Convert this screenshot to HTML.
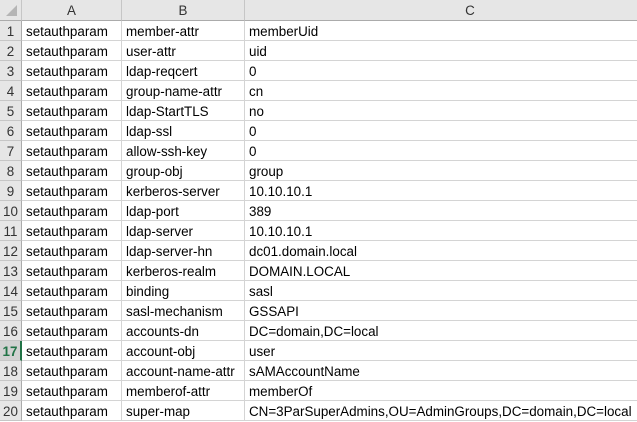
<!DOCTYPE html><html><head><style>
body{margin:0;width:637px;height:422px;overflow:hidden;background:#fff;font-family:"Liberation Sans",sans-serif;font-size:13.4px;color:#000;position:relative}
.h{position:absolute;top:0;height:21px;background:#e6e6e6;border-bottom:1px solid #ababab;border-right:1px solid #c6c6c6;box-sizing:border-box;text-align:center;line-height:21px;color:#333}
.r{position:absolute;left:0;width:22px;height:20px;background:#e6e6e6;border-right:1px solid #ababab;border-bottom:1px solid #c6c6c6;box-sizing:border-box;text-align:center;line-height:20px;color:#333}
.c{position:absolute;height:20px;border-right:1px solid #d4d4d4;border-bottom:1px solid #d4d4d4;box-sizing:border-box;line-height:21px;padding-left:4px;white-space:nowrap;overflow:hidden}
</style></head><body>
<div class="h" style="left:0;width:22px"><svg width="22" height="20" style="position:absolute;left:0;top:0"><polygon points="17,5 17,16 6,16" fill="#b5b5b5"/></svg></div>
<div class="h" style="left:22px;width:100px">A</div>
<div class="h" style="left:122px;width:123px">B</div>
<div class="h" style="left:245px;width:450px;border-right:none">C</div>
<div id="g"></div>
<script>
var d=[["member-attr","memberUid"],["user-attr","uid"],["ldap-reqcert","0"],["group-name-attr","cn"],["ldap-StartTLS","no"],["ldap-ssl","0"],["allow-ssh-key","0"],["group-obj","group"],["kerberos-server","10.10.10.1"],["ldap-port","389"],["ldap-server","10.10.10.1"],["ldap-server-hn","dc01.domain.local"],["kerberos-realm","DOMAIN.LOCAL"],["binding","sasl"],["sasl-mechanism","GSSAPI"],["accounts-dn","DC=domain,DC=local"],["account-obj","user"],["account-name-attr","sAMAccountName"],["memberof-attr","memberOf"],["super-map","CN=3ParSuperAdmins,OU=AdminGroups,DC=domain,DC=local"]];
var h="";
for(var i=0;i<20;i++){var t=21+i*20;
var hl=i==16?"background:#d2d2d2;color:#217346;border-right:2px solid #217346;font-weight:bold;":"";
h+='<div class="r" style="top:'+t+'px;line-height:21px;'+hl+'">'+(i+1)+'</div>';
h+='<div class="c" style="top:'+t+'px;left:22px;width:100px">setauthparam</div>';
h+='<div class="c" style="top:'+t+'px;left:122px;width:123px">'+d[i][0]+'</div>';
h+='<div class="c" style="top:'+t+'px;left:245px;width:450px;border-right:none">'+d[i][1]+'</div>';}
document.getElementById("g").innerHTML=h;
</script>
</body></html>
